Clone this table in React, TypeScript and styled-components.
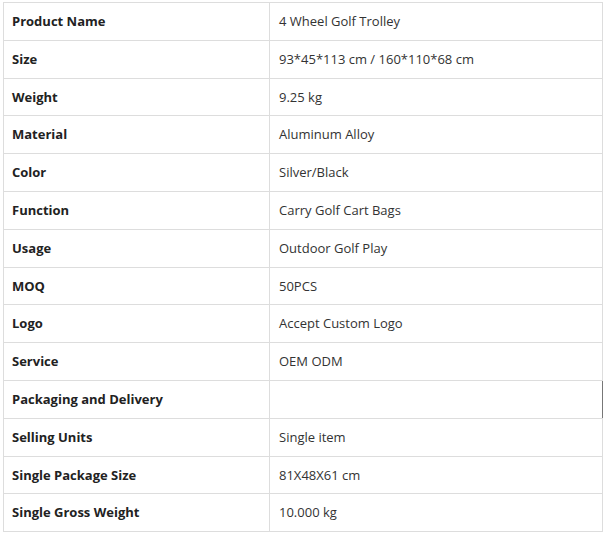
import React from "react";
import styled, { createGlobalStyle } from "styled-components";

const rows: [string, string][] = [
  ["Product Name", "4 Wheel Golf Trolley"],
  ["Size", "93*45*113 cm / 160*110*68 cm"],
  ["Weight", "9.25 kg"],
  ["Material", "Aluminum Alloy"],
  ["Color", "Silver/Black"],
  ["Function", "Carry Golf Cart Bags"],
  ["Usage", "Outdoor Golf Play"],
  ["MOQ", "50PCS"],
  ["Logo", "Accept Custom Logo"],
  ["Service", "OEM ODM"],
  ["Packaging and Delivery", ""],
  ["Selling Units", "Single item"],
  ["Single Package Size", "81X48X61 cm"],
  ["Single Gross Weight", "10.000 kg"],
];

const GlobalStyle = createGlobalStyle`
  body {
    margin: 0;
    background: #fff;
    font-family: "Open Sans", "Noto Sans", sans-serif;
  }
`;

const Page = styled.div`
  padding: 2px 0 0 3px;
`;

const SpecTable = styled.table`
  width: 600px;
  border-collapse: collapse;
  table-layout: fixed;
  color: #333;
  font-size: 13px;
`;

const LabelCell = styled.td`
  box-sizing: border-box;
  width: 266px;
  border: 1px solid #ddd;
  padding: 8px 8px;
  line-height: 20.8px;
  font-weight: 700;
  color: #222;
`;

const ValueCell = styled.td<{ $marked?: boolean }>`
  border: 1px solid #ddd;
  border-right-color: ${(p) => (p.$marked ? "#777" : "#ddd")};
  padding: 8px 9px;
  line-height: 20.8px;
`;

export default function App() {
  return (
    <Page>
      <GlobalStyle />
      <SpecTable>
        <tbody>
          {rows.map(([label, value]) => (
            <tr key={label}>
              <LabelCell>{label}</LabelCell>
              <ValueCell $marked={value === ""}>{value}</ValueCell>
            </tr>
          ))}
        </tbody>
      </SpecTable>
    </Page>
  );
}
